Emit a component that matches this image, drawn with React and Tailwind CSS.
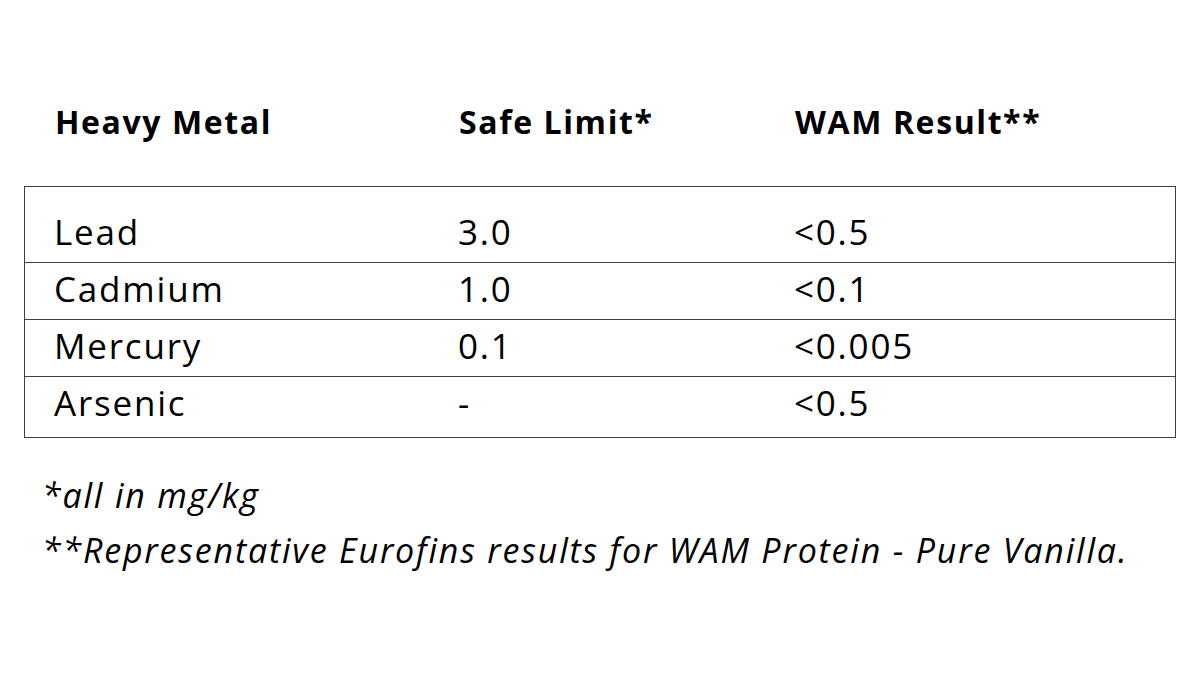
import React from 'react';

const rows = [
    { metal: 'Lead', limit: '3.0', result: '<0.5' },
    { metal: 'Cadmium', limit: '1.0', result: '<0.1' },
    { metal: 'Mercury', limit: '0.1', result: '<0.005' },
    { metal: 'Arsenic', limit: '-', result: '<0.5' },
];

export default function App() {
    return (
        <div className="w-[1200px] h-[675px] bg-white text-black overflow-hidden font-['Open_Sans',sans-serif]">
            {/* Header */}
            <div className="flex items-center h-[60px] mt-[92px] pl-[55px] text-[32px] font-bold tracking-[1.6px]">
                <div className="w-[404px]">Heavy Metal</div>
                <div className="w-[336px]">Safe Limit*</div>
                <div>WAM Result**</div>
            </div>

            {/* Table */}
            <div className="ml-[24px] mt-[34px] w-[1152px] border-[1.5px] border-[#404040] pt-[19px] text-[35px] tracking-[1.8px]">
                {rows.map((row, i) => (
                    <div
                        key={row.metal}
                        className={`flex items-center pl-[29px] pb-[4px] ${i < rows.length - 1 ? 'h-[57px] border-b-[1.5px] border-[#404040]' : 'h-[60px] pb-[8px]'}`}
                    >
                        <div className="w-[404px]">{row.metal}</div>
                        <div className="w-[336px]">{row.limit}</div>
                        <div>{row.result}</div>
                    </div>
                ))}
            </div>

            {/* Footnotes */}
            <div className="pl-[42px] pt-[30px] italic text-[34px] leading-[55px] tracking-[1.8px]">
                <p>*all in mg/kg</p>
                <p>**Representative Eurofins results for WAM Protein - Pure Vanilla.</p>
            </div>
        </div>
    );
}
